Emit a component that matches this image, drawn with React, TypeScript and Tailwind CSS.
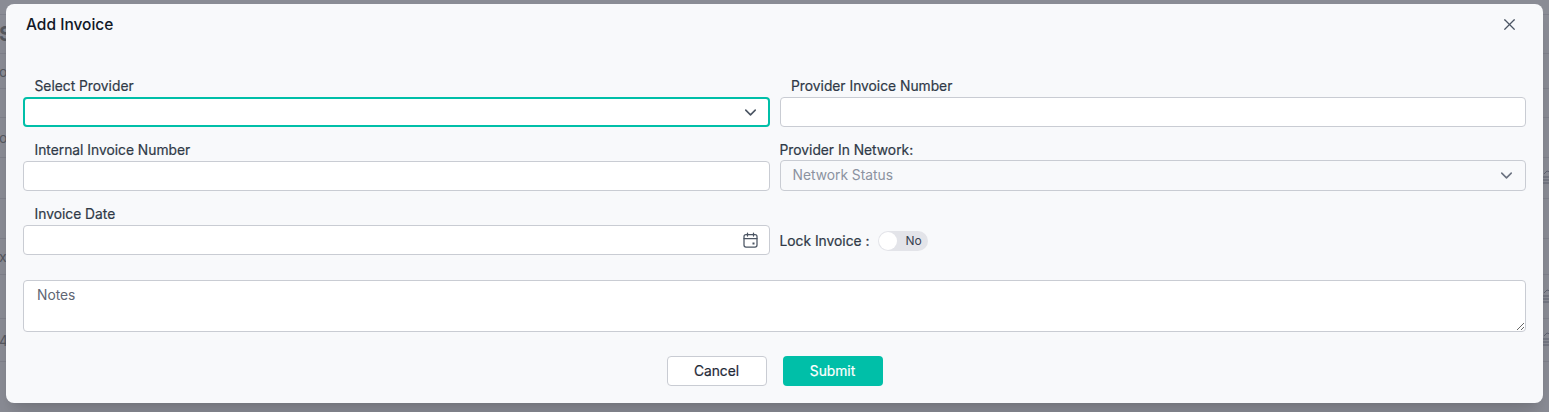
import { X, ChevronDown } from "lucide-react";
import type { ReactNode } from "react";

function Label({ children }: { children: ReactNode }) {
  return <label className="block h-[21px] pl-[11.5px] text-[13.8px] leading-[21px] font-normal text-[#2f3947] [-webkit-text-stroke:0.2px_#2f3947]">{children}</label>;
}

function Row({ height, left, icon, bold }: { height: string; left?: string; icon?: boolean; bold?: boolean }) {
  return (
    <div className={`${height} flex items-center justify-between border-b border-[#7f818b] text-[#55585f]`}>
      <span className={bold ? "-ml-[1px] text-[20px] font-bold" : "-ml-[1px] text-[14px]"}>{left}</span>
      {icon && (
        <svg width="8" height="18" viewBox="0 0 8 18" fill="none" stroke="#5f6270" strokeWidth="1" className="mr-[-2px]">
          <path d="M1 5 L4 2 L7 3" />
          <path d="M0 8h8M0 11h8M0 14h8" />
        </svg>
      )}
    </div>
  );
}

export default function App() {
  return (
    <div className="relative h-[412px] w-[1549px] overflow-hidden bg-[#8a8c95] font-['Inter','Liberation_Sans',sans-serif]">
      <div aria-hidden="true">
        <Row height="h-[15px]" />
        <Row height="h-[39px]" left="S" bold />
        <Row height="h-[35px]" left="o" />
        <Row height="h-[29px]" />
        <Row height="h-[40px]" left="ol" />
        <Row height="h-[41px]" icon />
        <Row height="h-[40px]" />
        <Row height="h-[36px]" left="x" />
        <Row height="h-[44px]" icon />
        <Row height="h-[43px]" left="4" icon />
      </div>
      <div className="absolute left-[6px] top-1 h-[399px] w-[1537px] rounded-lg bg-[#f8f9fb] shadow-xl">
        <div className="flex h-[40px] items-center justify-between pl-5 pr-[24px] pt-[1px]">
          <h2 className="text-[15.5px] font-medium leading-6 text-[#111827]">Add Invoice</h2>
          <X size={19} strokeWidth={1.5} className="-mt-[1px] text-[#4b5563]" />
        </div>
        <div className="px-[17px] pt-[32px]">
          <div className="grid grid-cols-2 gap-x-[10px] gap-y-[13px]">
            <div>
              <Label>Select Provider</Label>
              <div className="flex h-[30px] items-center justify-end rounded border-2 border-[#00bfa8] bg-white pr-[8px]">
                <ChevronDown size={19} strokeWidth={2} className="text-[#4b5563]" />
              </div>
            </div>
            <div>
              <Label>Provider Invoice Number</Label>
              <div className="h-[30px] rounded border border-[#c9ccd3] bg-white" />
            </div>
            <div>
              <Label>Internal Invoice Number</Label>
              <div className="h-[30px] rounded border border-[#c9ccd3] bg-white" />
            </div>
            <div>
              <div className="h-[20px] text-[13.8px] font-normal leading-[20px] text-[#2f3947] [-webkit-text-stroke:0.2px_#2f3947]">Provider In Network:</div>
              <div className="flex h-[31px] items-center justify-between rounded border border-[#c9ccd3] bg-[#f8f9fb] pl-3 pr-[9px]">
                <span className="text-[13.8px] text-[#8b92a0]">Network Status</span>
                <ChevronDown size={19} strokeWidth={2} className="text-[#6b7280]" />
              </div>
            </div>
            <div>
              <Label>Invoice Date</Label>
              <div className="flex h-[30px] items-center justify-end rounded border border-[#c9ccd3] bg-white pr-[11px]">
                <svg width="15" height="16" viewBox="0 0 15 16" fill="none" stroke="#4b5563" strokeWidth="1.25" strokeLinecap="round">
                  <rect x="1" y="2.5" width="13" height="12.5" rx="2" />
                  <path d="M1 6.5h13M4.5 1v3M10.5 1v3" />
                  <rect x="9.5" y="10.5" width="2" height="2" fill="#4b5563" stroke="none" />
                </svg>
              </div>
            </div>
            <div className="flex items-center gap-[9px] pt-[23px]">
              <span className="text-[13.8px] font-normal text-[#2f3947] [-webkit-text-stroke:0.2px_#2f3947]">Lock Invoice :</span>
              <div className="flex h-5 w-[50px] items-center rounded-full bg-[#e3e4e9] pl-[1px]">
                <span className="h-[18px] w-[18px] rounded-full bg-white" />
                <span className="ml-2 text-[12px] font-normal text-[#374151]">No</span>
              </div>
            </div>
          </div>
          <textarea
            placeholder="Notes"
            className="mt-[25px] block h-[52px] w-full rounded border border-[#c9ccd3] bg-white px-[13px] py-[4px] text-[13.8px] leading-5 placeholder:text-[#5f6673]"
          />
          <div className="mt-6 flex justify-center gap-4">
            <button className="h-[30px] w-[100px] rounded border border-[#c9ccd3] bg-white text-[13.8px] font-normal text-[#1f2937] [-webkit-text-stroke:0.2px_#1f2937]">Cancel</button>
            <button className="h-[30px] w-[100px] rounded bg-[#00bfa8] text-[13.8px] font-normal text-white [-webkit-text-stroke:0.2px_#ffffff]">Submit</button>
          </div>
        </div>
      </div>
    </div>
  );
}
